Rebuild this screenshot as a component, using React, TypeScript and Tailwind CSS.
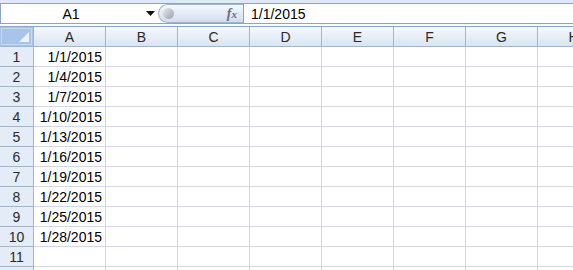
import React from "react";

const cols = ["A", "B", "C", "D", "E", "F", "G", "H"];
const values = [
  "1/1/2015",
  "1/4/2015",
  "1/7/2015",
  "1/10/2015",
  "1/13/2015",
  "1/16/2015",
  "1/19/2015",
  "1/22/2015",
  "1/25/2015",
  "1/28/2015",
  "",
  "",
];

export default function App() {
  return (
    <div
      className="w-[573px] h-[270px] overflow-hidden bg-white text-black"
      style={{ fontFamily: '"Liberation Sans", Arial, sans-serif' }}
    >
      {/* top band */}
      <div className="h-[3px] bg-[#dfe8f5]" />
      {/* formula bar */}
      <div className="flex h-[21px] border-y border-[#8aa5c9] bg-white">
        <div className="relative flex w-[158px] shrink-0 items-center border-l border-[#8aa5c9]">
          <span className="w-[140px] text-center text-[14px] leading-none">A1</span>
          <svg className="absolute left-[145px] top-[7px]" width="9" height="5" viewBox="0 0 9 5">
            <path d="M0 0 H9 L4.5 5 Z" fill="#111" />
          </svg>
        </div>
        <div className="relative flex h-[19px] w-[85px] shrink-0 items-center rounded-l-full border-y border-l border-[#9db3d2] bg-gradient-to-b from-[#f6f9fd] via-[#e3ebf6] to-[#d2ddec]">
          <div className="ml-[4px] h-[11px] w-[11px] rounded-full bg-gradient-to-br from-[#e6e9ee] to-[#9aa3ae]" />
          <span
            className="absolute right-[6px] top-[1px] text-[14px] font-bold italic leading-[16px] text-[#6b6f75]"
            style={{ fontFamily: '"Liberation Serif", "Times New Roman", serif' }}
          >
            f<span className="text-[11px]">x</span>
          </span>
        </div>
        <div className="flex flex-1 items-center border-l border-[#8aa5c9] pl-[7px]">
          <span className="text-[14px] leading-none">1/1/2015</span>
        </div>
      </div>
      <div className="h-[2px] bg-white" />
      <div className="h-px bg-[#8aa5c9]" />
      {/* column headers */}
      <div className="flex h-[20px]">
        <div className="relative w-[34px] shrink-0 border-r border-b border-[#9eb6ce] bg-[#a9c4e9]">
          <div className="absolute inset-[1px] border border-[#c7d9f1]" />
          <svg className="absolute right-[4px] bottom-[4px]" width="10" height="10" viewBox="0 0 10 10">
            <path d="M10 0 V10 H0 Z" fill="#eef2f8" />
          </svg>
        </div>
        {cols.map((c) => (
          <div
            key={c}
            className="flex w-[72px] shrink-0 items-center justify-center border-r border-b border-[#9eb6ce] bg-gradient-to-b from-[#f6f9fc] to-[#dbe4f0] text-[14px] leading-none text-[#2a2a2a]"
          >
            {c}
          </div>
        ))}
      </div>
      {/* rows */}
      {values.map((v, i) => (
        <div key={i} className="flex h-[20px]">
          <div className="flex w-[34px] shrink-0 items-center justify-center border-r border-b border-[#9eb6ce] bg-[#e4ecf7] text-[14px] leading-none text-[#2a2a2a]">
            {i + 1}
          </div>
          {cols.map((c, j) => (
            <div
              key={c}
              className="flex w-[72px] shrink-0 items-center justify-end border-r border-b border-[#d0d7e5] pr-[3px] text-[14px] leading-none"
            >
              {j === 0 ? v : ""}
            </div>
          ))}
        </div>
      ))}
    </div>
  );
}
